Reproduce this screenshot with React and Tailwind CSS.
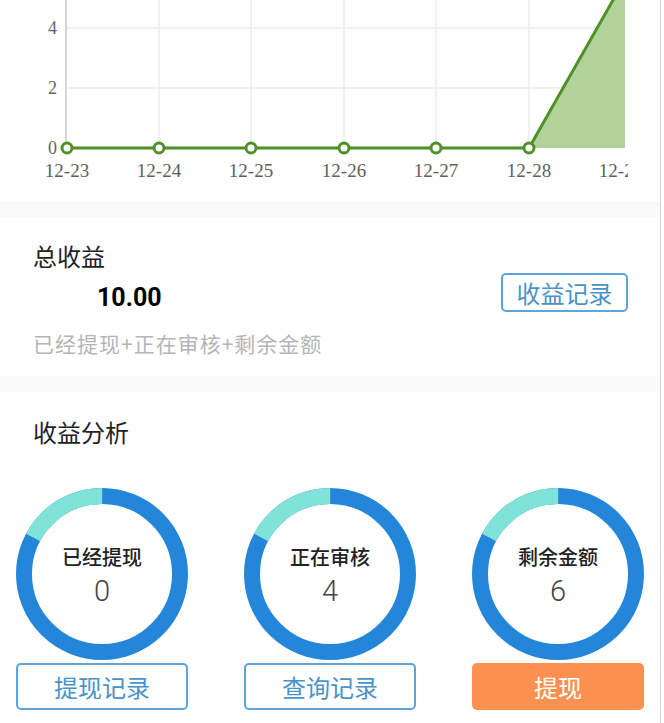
import React from 'react';

const days = ['12-23', '12-24', '12-25', '12-26', '12-27', '12-28', '12-29'];
const xs = [67, 159, 251, 344, 436, 529, 621];

function Chart() {
  return (
    <svg width="660" height="202" className="block">
      <defs>
        <clipPath id="plot">
          <rect x="0" y="0" width="625" height="160" />
        </clipPath>
        <clipPath id="labels">
          <rect x="0" y="0" width="628" height="202" />
        </clipPath>
      </defs>
      {[28, 88].map((y) => (
        <line key={y} x1="66" x2="625" y1={y} y2={y} stroke="#ececec" strokeWidth="1.5" />
      ))}
      {xs.slice(1).map((x) => (
        <line key={x} x1={x} x2={x} y1="0" y2="148" stroke="#ececec" strokeWidth="1.5" />
      ))}
      <line x1="66" x2="66" y1="0" y2="149" stroke="#d6d6d6" strokeWidth="2" />
      <g fontFamily="'Liberation Serif', serif" fontSize="18" fill="#666">
        <text x="57" y="34" textAnchor="end">4</text>
        <text x="57" y="94" textAnchor="end">2</text>
        <text x="57" y="154" textAnchor="end">0</text>
      </g>
      <g clipPath="url(#plot)">
        <polygon points="529,148 625,-21 625,148" fill="#b2d29c" />
        <polyline
          points="67,148 159,148 251,148 344,148 436,148 529,148 625,-21"
          fill="none"
          stroke="#4f9126"
          strokeWidth="3"
          strokeLinejoin="round"
        />
      </g>
      {xs.slice(0, 6).map((x) => (
        <circle key={x} cx={x} cy="148" r="5" fill="#fff" stroke="#4f9126" strokeWidth="3" />
      ))}
      <g clipPath="url(#labels)" fontFamily="'Liberation Serif', serif" fontSize="19" fill="#606060">
        {days.map((d, i) => (
          <text key={d} x={xs[i]} y="177" textAnchor="middle">
            {d}
          </text>
        ))}
      </g>
    </svg>
  );
}

function Donut({ label, value }) {
  const r = 78;
  const c = 2 * Math.PI * r;
  const teal = c * (62 / 360);
  return (
    <div className="relative w-[172px] h-[172px]">
      <svg width="172" height="172" className="absolute inset-0">
        <circle cx="86" cy="86" r={r} fill="none" stroke="#2386d8" strokeWidth="16" />
        <circle
          cx="86"
          cy="86"
          r={r}
          fill="none"
          stroke="#80e2d8"
          strokeWidth="16"
          strokeDasharray={`${teal} ${c}`}
          transform="rotate(-152 86 86)"
        />
      </svg>
      <div className="absolute inset-0 flex flex-col items-center pt-[55px]">
        <div className="text-[20px] leading-[28px] font-medium text-[#222]">{label}</div>
        <div className="mt-[2px] text-[29px] leading-[36px] font-light text-[#444] font-['Roboto',sans-serif]">
          {value}
        </div>
      </div>
    </div>
  );
}

const items = [
  { label: '已经提现', value: '0', btn: '提现记录' },
  { label: '正在审核', value: '4', btn: '查询记录' },
  { label: '剩余金额', value: '6', btn: '提现', primary: true },
];

export default function App() {
  return (
    <div className="w-[664px] h-[723px] overflow-hidden bg-white font-['Noto_Sans_CJK_SC','Noto_Sans',sans-serif]">
      <div className="w-[661px] h-full border-r border-[#d4d4d4]">
        <Chart />
        <div className="h-[15px] bg-[#f9f9f9]" />

        <div className="h-[159px] px-[33px] pt-[23px] relative">
          <div className="text-[24px] leading-[32px] text-[#222]">总收益</div>
          <div className="pl-[64px] mt-[10px] text-[25px] leading-[32px] font-bold text-black font-['Roboto',sans-serif]">
            10.00
          </div>
          <div className="mt-[14px] text-[21px] leading-[30px] tracking-[1px] text-[#b5b5b5]">
            已经提现+正在审核+剩余金额
          </div>
          <button className="absolute left-[501px] top-[56px] w-[127px] h-[39px] border-2 border-[#5aa6dc] rounded-[5px] text-[24px] leading-none text-[#4a92c9]">
            收益记录
          </button>
        </div>

        <div className="h-[16px] bg-[#f9f9f9]" />

        <div className="pt-[24px]">
          <div className="px-[33px] text-[24px] leading-[32px] text-[#222]">收益分析</div>
          <div className="flex px-[16px] gap-[56px] mt-[40px]">
            {items.map((it) => (
              <div key={it.label} className="w-[172px] flex flex-col">
                <Donut label={it.label} value={it.value} />
                <button
                  className={
                    it.primary
                      ? 'mt-[3px] h-[47px] rounded-[5px] bg-[#fb9150] text-white text-[24px] leading-none'
                      : 'mt-[3px] h-[47px] rounded-[5px] border-2 border-[#5aa6dc] text-[#4a92c9] text-[24px] leading-none'
                  }
                >
                  {it.btn}
                </button>
              </div>
            ))}
          </div>
        </div>
      </div>
    </div>
  );
}
